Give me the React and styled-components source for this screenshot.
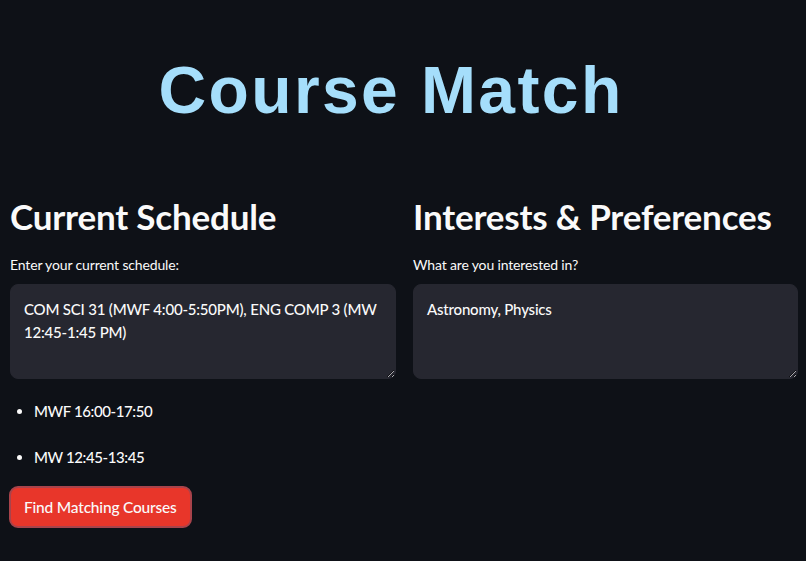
import React from "react";
import styled, { createGlobalStyle } from "styled-components";

const Global = createGlobalStyle`
  html, body { margin: 0; padding: 0; background: #0e1117; }
  body { font-family: Lato, "Noto Sans", sans-serif; color: #fafafa; }
  * { box-sizing: border-box; }
`;

const Page = styled.div`
  width: 806px;
  height: 561px;
  overflow: hidden;
  background: #0e1117;
  padding: 0 8px 0 10px;
`;

const Title = styled.h1`
  margin: 0;
  padding: 52px 26px 0 0;
  height: 188px;
  text-align: center;
  font-family: "Liberation Sans", Arial, sans-serif;
  font-weight: 700;
  font-size: 66px;
  letter-spacing: 2.4px;
  line-height: 76px;
  color: #a5defb;
`;

const Columns = styled.div`
  display: grid;
  grid-template-columns: 386px 385px;
  column-gap: 17px;
`;

const Column = styled.div`
  display: flex;
  flex-direction: column;
`;

const Heading = styled.h2`
  margin: 0;
  font-size: 35px;
  font-weight: 700;
  line-height: 56px;
  color: #fafafa;
  letter-spacing: -0.2px;
`;

const Label = styled.label`
  margin-top: 11px;
  font-size: 14px;
  line-height: 20px;
  letter-spacing: -0.15px;
  color: #fafafa;
`;

const TextArea = styled.textarea`
  margin-top: 9px;
  height: 95px;
  width: 100%;
  resize: vertical;
  background: #262730;
  border: 1px solid #262730;
  border-radius: 8px;
  color: #fafafa;
  font-family: Lato, "Noto Sans", sans-serif;
  font-weight: 500;
  font-size: 15px;
  letter-spacing: -0.2px;
  line-height: 23px;
  padding: 13px 13px;
  outline: none;
`;

const List = styled.ul`
  margin: 20px 0 0 0;
  padding: 0 0 0 24px;
  list-style: disc;
`;

const Item = styled.li`
  font-size: 15px;
  font-weight: 500;
  letter-spacing: -0.4px;
  line-height: 24px;
  margin-bottom: 22px;
  &:last-child { margin-bottom: 0; }
`;

const Button = styled.button`
  margin-top: 17px;
  align-self: flex-start;
  margin-left: -1px;
  height: 42px;
  padding: 0 13px;
  background: #e8362a;
  color: #fafafa;
  border: 2px solid #a8434b;
  border-radius: 9px;
  font-family: Lato, "Noto Sans", sans-serif;
  font-weight: 500;
  font-size: 15.5px;
  letter-spacing: -0.2px;
  cursor: pointer;
`;

export default function App() {
  return (
    <Page>
      <Global />
      <Title>Course Match</Title>
      <Columns>
        <Column>
          <Heading>Current Schedule</Heading>
          <Label>Enter your current schedule:</Label>
          <TextArea defaultValue="COM SCI 31 (MWF 4:00-5:50PM), ENG COMP 3 (MW 12:45-1:45 PM)" />
          <List>
            <Item>MWF 16:00-17:50</Item>
            <Item>MW 12:45-13:45</Item>
          </List>
          <Button>Find Matching Courses</Button>
        </Column>
        <Column>
          <Heading>Interests &amp; Preferences</Heading>
          <Label>What are you interested in?</Label>
          <TextArea defaultValue="Astronomy, Physics" />
        </Column>
      </Columns>
    </Page>
  );
}
